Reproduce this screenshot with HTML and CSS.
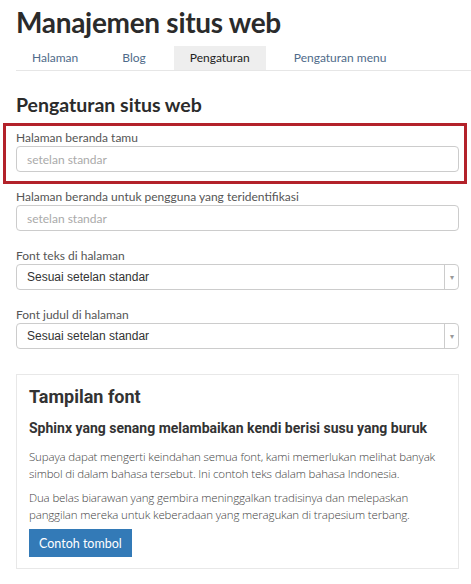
FILE: index.html
```html
<!DOCTYPE html>
<html lang="id">
<head>
    <meta charset="UTF-8">
    <meta name="viewport" content="width=device-width, initial-scale=1.0">
    <title>Manajemen situs web</title>
    <link rel="stylesheet" href="styles.css">
</head>
<body>
    <div class="page">
        <h1>Manajemen situs web</h1>

        <ul class="tabs">
            <li><a href="#">Halaman</a></li>
            <li><a href="#">Blog</a></li>
            <li class="active"><a href="#">Pengaturan</a></li>
            <li><a href="#">Pengaturan menu</a></li>
        </ul>

        <h2>Pengaturan situs web</h2>

        <div class="highlight">
            <label for="guestHome">Halaman beranda tamu</label>
            <input type="text" id="guestHome" placeholder="setelan standar">
        </div>

        <div class="field first">
            <label for="userHome">Halaman beranda untuk pengguna yang teridentifikasi</label>
            <input type="text" id="userHome" placeholder="setelan standar">
        </div>

        <div class="field">
            <label>Font teks di halaman</label>
            <div class="select">
                <span class="select-value">Sesuai setelan standar</span>
                <span class="select-arrow">&#9662;</span>
            </div>
        </div>

        <div class="field">
            <label>Font judul di halaman</label>
            <div class="select">
                <span class="select-value">Sesuai setelan standar</span>
                <span class="select-arrow">&#9662;</span>
            </div>
        </div>

        <div class="preview">
            <h3>Tampilan font</h3>
            <h4>Sphinx yang senang melambaikan kendi berisi susu yang buruk</h4>
            <p>Supaya dapat mengerti keindahan semua font, kami memerlukan melihat banyak simbol di dalam bahasa tersebut. Ini contoh teks dalam bahasa Indonesia.</p>
            <p>Dua belas biarawan yang gembira meninggalkan tradisinya dan melepaskan panggilan mereka untuk keberadaan yang meragukan di trapesium terbang.</p>
            <button class="btn">Contoh tombol</button>
        </div>
    </div>
</body>
</html>
```

FILE: styles.css
```css
body {
    font-family: 'Lato', sans-serif;
    margin: 0;
    background-color: #fff;
    color: #333;
}
.page {
    padding: 4px 12px 0 16px;
}
h1 {
    font-size: 28px;
    font-weight: 700;
    letter-spacing: -0.3px;
    margin: 0 0 6px;
    line-height: 36px;
    color: #2b2b2b;
}
.tabs {
    list-style: none;
    margin: 0 -12px 0 0;
    padding: 0;
    display: flex;
    gap: 12px;
    border-bottom: 1px solid #e6e6e6;
}
.tabs a {
    display: block;
    padding: 0 16px;
    line-height: 24px;
    font-size: 12px;
    color: #4f6b8a;
    text-decoration: none;
}
.tabs .active a {
    background-color: #eee;
    color: #222;
}
h2 {
    font-size: 19.5px;
    font-weight: 700;
    margin: 20px 0 0;
    line-height: 28px;
    color: #2b2b2b;
}
.highlight {
    margin: 4px -8px 0 -13px;
    border: 3px solid #b3222a;
    padding: 4px 5px 9px 10px;
}
.highlight label {
    margin-bottom: 0;
}
.field {
    margin-top: 17px;
}
.field.first {
    margin-top: 5px;
}
label {
    display: block;
    font-size: 12px;
    color: #555;
    line-height: 16px;
}
input {
    display: block;
    box-sizing: border-box;
    width: 100%;
    height: 26px;
    padding: 0 10px;
    border: 1px solid #ccc;
    border-radius: 4px;
    font-family: inherit;
    font-size: 12px;
}
input::placeholder {
    color: #aaa;
}
.select {
    display: flex;
    height: 26px;
    box-sizing: border-box;
    border: 1px solid #ccc;
    border-radius: 4px;
}
.select-value {
    flex: 1;
    padding-left: 10px;
    line-height: 24px;
    font-family: 'Liberation Sans', Arial, sans-serif;
    font-size: 12px;
    color: #333;
}
.select-arrow {
    width: 13px;
    border-left: 1px solid #ccc;
    text-align: center;
    line-height: 24px;
    font-size: 8px;
    color: #999;
}
.preview {
    margin-top: 25px;
    border: 1px solid #e8e8e8;
    padding: 10px 12px 11px;
}
h3 {
    font-family: 'Roboto', sans-serif;
    font-size: 18px;
    font-weight: 700;
    margin: 0;
    line-height: 24px;
}
h4 {
    font-family: 'Roboto', sans-serif;
    font-size: 14px;
    font-weight: 700;
    margin: 10px 0 11px;
    line-height: 18px;
}
p {
    font-family: 'Open Sans', sans-serif;
    font-weight: 300;
    font-size: 11.5px;
    letter-spacing: -0.15px;
    line-height: 17px;
    color: #444;
    margin: 0 0 7px;
}
.btn {
    display: block;
    margin-top: -1px;
    background-color: #337ab7;
    color: #fff;
    border: none;
    font-family: inherit;
    font-size: 12.5px;
    padding: 0 10px;
    height: 28px;
}
```
